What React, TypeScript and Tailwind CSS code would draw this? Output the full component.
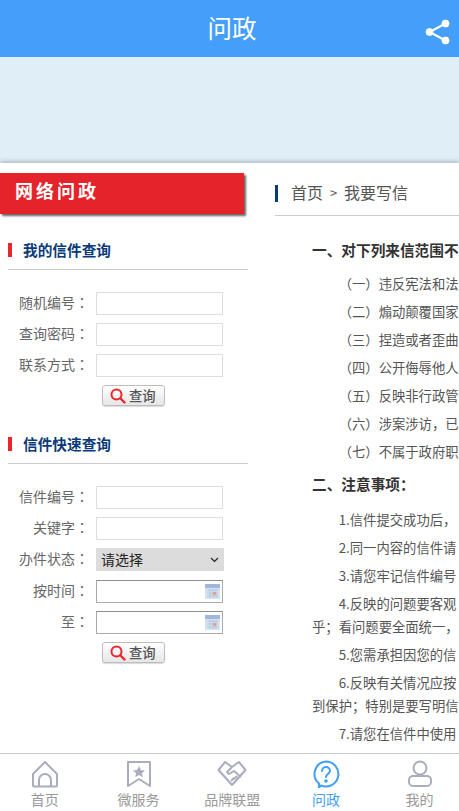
import { ReactNode } from 'react'

const font = "font-['Noto_Sans_CJK_SC','Noto_Sans',sans-serif]"

function SearchButton() {
  return (
    <div className="ml-[102px] flex h-[21px] w-[63px] items-center gap-[3px] rounded-[3px] border border-[#bdbdbd] bg-gradient-to-b from-white to-[#e6e6e6] pl-[7px] text-[13.33px] font-medium text-[#555] shadow-[0_1px_1px_rgba(0,0,0,0.15)]">
      <svg width="16" height="16" viewBox="0 0 16 16" fill="none" stroke="#e8262c">
        <circle cx="6.500" cy="6.500" r="5" strokeWidth="2" />
        <path d="M10.500 10.500l4 4" strokeWidth="2.400" strokeLinecap="round" />
      </svg>
      <span>查询</span>
    </div>
  )
}

function Calendar() {
  return (
    <svg className="absolute right-[2px] top-[3px]" width="15" height="15" viewBox="0 0 15 15">
      <rect width="15" height="15" fill="#d6e2f2" />
      <rect width="15" height="4" fill="#9db8dc" />
      <path d="M2 6h11M2 9h11M2 12h11M5 5v9M8 5v9M11 5v9" stroke="#b6c6dc" strokeWidth="1" />
      <rect x="8" y="8" width="3" height="3" fill="#eaa08c" />
    </svg>
  )
}

function Row({ label, children }: { label: string; children: ReactNode }) {
  return (
    <div className="flex h-[23px] items-center">
      <span className="w-[89px] pb-[2px] text-right text-[14px] text-[#666]">
        {label}
        <span className="font-['Noto_Sans_CJK_TC',sans-serif]">：</span>
      </span>
      <div className="ml-[7px]">{children}</div>
    </div>
  )
}

function TextInput() {
  return <input type="text" className="block h-[23px] w-[127px] border border-[#dedede] bg-white outline-none" />
}

function DateInput() {
  return (
    <div className="relative h-[23px] w-[127px] border border-[#aaa] border-t-[#8c8c8c] bg-white">
      <Calendar />
    </div>
  )
}

function StatusSelect() {
  return (
    <div className="relative h-[23px] w-[128px]">
      <select className="block h-[23px] w-full appearance-none border-0 bg-[#dcdcdc] pl-[5px] text-[14px] text-[#222] outline-none">
        <option>请选择</option>
      </select>
      <svg className="pointer-events-none absolute right-[5px] top-[9px]" width="9" height="6" viewBox="0 0 9 6" fill="none" stroke="#222" strokeWidth="1.200">
        <path d="M1 1l3.500 3.500L8 1" />
      </svg>
    </div>
  )
}

function SectionTitle({ children }: { children: ReactNode }) {
  return (
    <div className="ml-2 flex h-[30px] w-[240px] items-start border-b border-[#ccc]">
      <span className="mt-[3px] h-[14px] w-[4px] bg-[#e8262c]" />
      <span className="ml-[11px] text-[14.67px] font-bold leading-[20px] text-[#0a3a78]">{children}</span>
    </div>
  )
}

function LeftColumn() {
  return (
    <div className="w-[248px] shrink-0 pt-[10px]">
      <div className="h-[41px] w-[244px] bg-[#e4242a] pl-[15px] text-[18px] font-bold leading-[35px] tracking-[3px] text-white shadow-[2px_2px_2px_#666]">
        网络问政
      </div>
      <div className="mt-[26px]">
        <SectionTitle>我的信件查询</SectionTitle>
      </div>
      <div className="mt-[22px] flex flex-col gap-2">
        <Row label="随机编号"><TextInput /></Row>
        <Row label="查询密码"><TextInput /></Row>
        <Row label="联系方式"><TextInput /></Row>
      </div>
      <div className="mt-2">
        <SearchButton />
      </div>
      <div className="mt-[28px]">
        <SectionTitle>信件快速查询</SectionTitle>
      </div>
      <div className="mt-[22px] flex flex-col gap-2">
        <Row label="信件编号"><TextInput /></Row>
        <Row label="关键字"><TextInput /></Row>
        <div className="mb-[1px]">
          <Row label="办件状态"><StatusSelect /></Row>
        </div>
        <Row label="按时间"><DateInput /></Row>
        <Row label="至"><DateInput /></Row>
      </div>
      <div className="mt-2">
        <SearchButton />
      </div>
    </div>
  )
}

function Heading({ children }: { children: ReactNode }) {
  return <p className="whitespace-nowrap pl-[37px] text-[14.67px] font-bold leading-[23px] text-[#333]">{children}</p>
}

function Para({ children }: { children: ReactNode }) {
  return <p className="mb-[5px] whitespace-nowrap pl-[37px] indent-[2em] text-[13.33px] leading-[23px] text-[#555]">{children}</p>
}

function RightColumn() {
  return (
    <div className="ml-[27px] min-w-0 flex-1 overflow-hidden pt-[22px]">
      <div className="flex h-[31px] items-start border-b border-[#ccc]">
        <span className="h-[17px] w-[3px] bg-[#0a3a78]" />
        <span className="ml-[13px] -mt-[1px] flex text-[16px] leading-[17px] text-[#555]">
          首页
          <span className="w-[21px] text-center text-[13px]">&gt;</span>
          我要写信
        </span>
      </div>
      <div className="mt-[22px]">
        <Heading>一、对下列来信范围不</Heading>
      </div>
      <div className="mt-[11px]">
        <Para>（一）违反宪法和法</Para>
        <Para>（二）煽动颠覆国家</Para>
        <Para>（三）捏造或者歪曲</Para>
        <Para>（四）公开侮辱他人</Para>
        <Para>（五）反映非行政管</Para>
        <Para>（六）涉案涉访，已</Para>
        <Para>（七）不属于政府职</Para>
      </div>
      <div className="mt-[9px]">
        <Heading>二、注意事项：</Heading>
      </div>
      <div className="mt-[13px]">
        <Para>1.信件提交成功后，</Para>
        <Para>2.同一内容的信件请</Para>
        <Para>3.请您牢记信件编号</Para>
        <Para>
          4.反映的问题要客观
          <br />
          乎；看问题要全面统一，
        </Para>
        <Para>5.您需承担因您的信</Para>
        <Para>
          6.反映有关情况应按
          <br />
          到保护；特别是要写明信
        </Para>
        <Para>7.请您在信件中使用</Para>
      </div>
    </div>
  )
}

function NavItem({ label, active, children }: { label: string; active?: boolean; children: ReactNode }) {
  return (
    <div className={`flex w-[93.7px] shrink-0 flex-col items-center ${active ? 'text-[#3fa0f5]' : 'text-[#999]'}`}>
      {children}
      <span className="mt-[1px] text-[14px] leading-[20px]">{label}</span>
    </div>
  )
}

function BottomNav() {
  const stroke = '#a9adbd'
  return (
    <div className="-ml-[2px] flex h-[58px] w-[461px] shrink-0 border-t border-[#ccc] bg-white pt-[6px]">
      <NavItem label="首页">
        <svg width="28" height="28" viewBox="0 0 28 28" fill="none" stroke={stroke} strokeWidth="2" strokeLinejoin="round">
          <path d="M14 2L2 14v11.500a1 1 0 001 1h22a1 1 0 001-1V14z" />
          <path d="M8 26v-6a6 6 0 0112 0v6" />
        </svg>
      </NavItem>
      <NavItem label="微服务">
        <svg width="28" height="28" viewBox="0 0 28 28" fill="none" stroke={stroke} strokeWidth="2" strokeLinejoin="round">
          <path d="M3 2h22v24l-11-7-11 7z" />
          <path d="M14 6l1.900 4 4.100.4-3.100 2.800.9 4.100-3.800-2.200-3.800 2.200.9-4.100L8 10.400l4.100-.4z" fill={stroke} stroke="none" />
        </svg>
      </NavItem>
      <NavItem label="品牌联盟">
        <svg width="30" height="28" viewBox="0 0 30 28" fill="none" stroke={stroke} strokeWidth="2" strokeLinejoin="round">
          <path d="M8 2L1.500 10 15 25l13.500-15L22 2l-7 5z" />
          <path d="M15 7l-5 5 2 2 5-3 7 6" />
          <path d="M14 21l3-3M17 19l3-3" />
        </svg>
      </NavItem>
      <NavItem label="问政" active>
        <svg width="28" height="28" viewBox="0 0 28 28" fill="none" stroke="#3fa0f5" strokeWidth="2" strokeLinecap="round">
          <path d="M14 1.500a12.500 12.500 0 1 1-5 24l-2 2v-4A12.500 12.500 0 0 1 14 1.500z" strokeLinejoin="round" />
          <path d="M10 11a4 4 0 118 0c0 2.500-4 3-4 6" />
          <circle cx="14" cy="21" r="0.8" fill="#3fa0f5" />
        </svg>
      </NavItem>
      <NavItem label="我的">
        <svg width="26" height="28" viewBox="0 0 26 28" fill="none" stroke={stroke} strokeWidth="2">
          <circle cx="13" cy="8" r="6.500" />
          <rect x="2" y="16" width="22" height="10" rx="4" />
        </svg>
      </NavItem>
    </div>
  )
}

export default function App() {
  return (
    <div className={`flex h-[811px] w-[459px] flex-col overflow-hidden bg-white ${font}`}>
      <div className="relative flex h-[57px] shrink-0 items-center justify-center bg-[#459ffa] pl-[5px] text-[24.5px] text-white">
        问政
        <svg className="absolute right-[9px] top-[19px]" width="25" height="26" viewBox="0 0 25 26" fill="white" stroke="white">
          <circle cx="20.500" cy="4.500" r="3.500" />
          <circle cx="4.500" cy="13" r="3.500" />
          <circle cx="20.500" cy="21.500" r="3.500" />
          <path d="M20.500 4.500L4.500 13l16 8.500" fill="none" strokeWidth="2" />
        </svg>
      </div>
      <div className="h-[106px] shrink-0 bg-[#e0eef8]" />
      <div className="z-10 flex min-h-0 flex-1 overflow-hidden bg-white shadow-[0_-2px_4px_rgba(0,0,0,0.2)]">
        <LeftColumn />
        <RightColumn />
      </div>
      <BottomNav />
    </div>
  )
}
